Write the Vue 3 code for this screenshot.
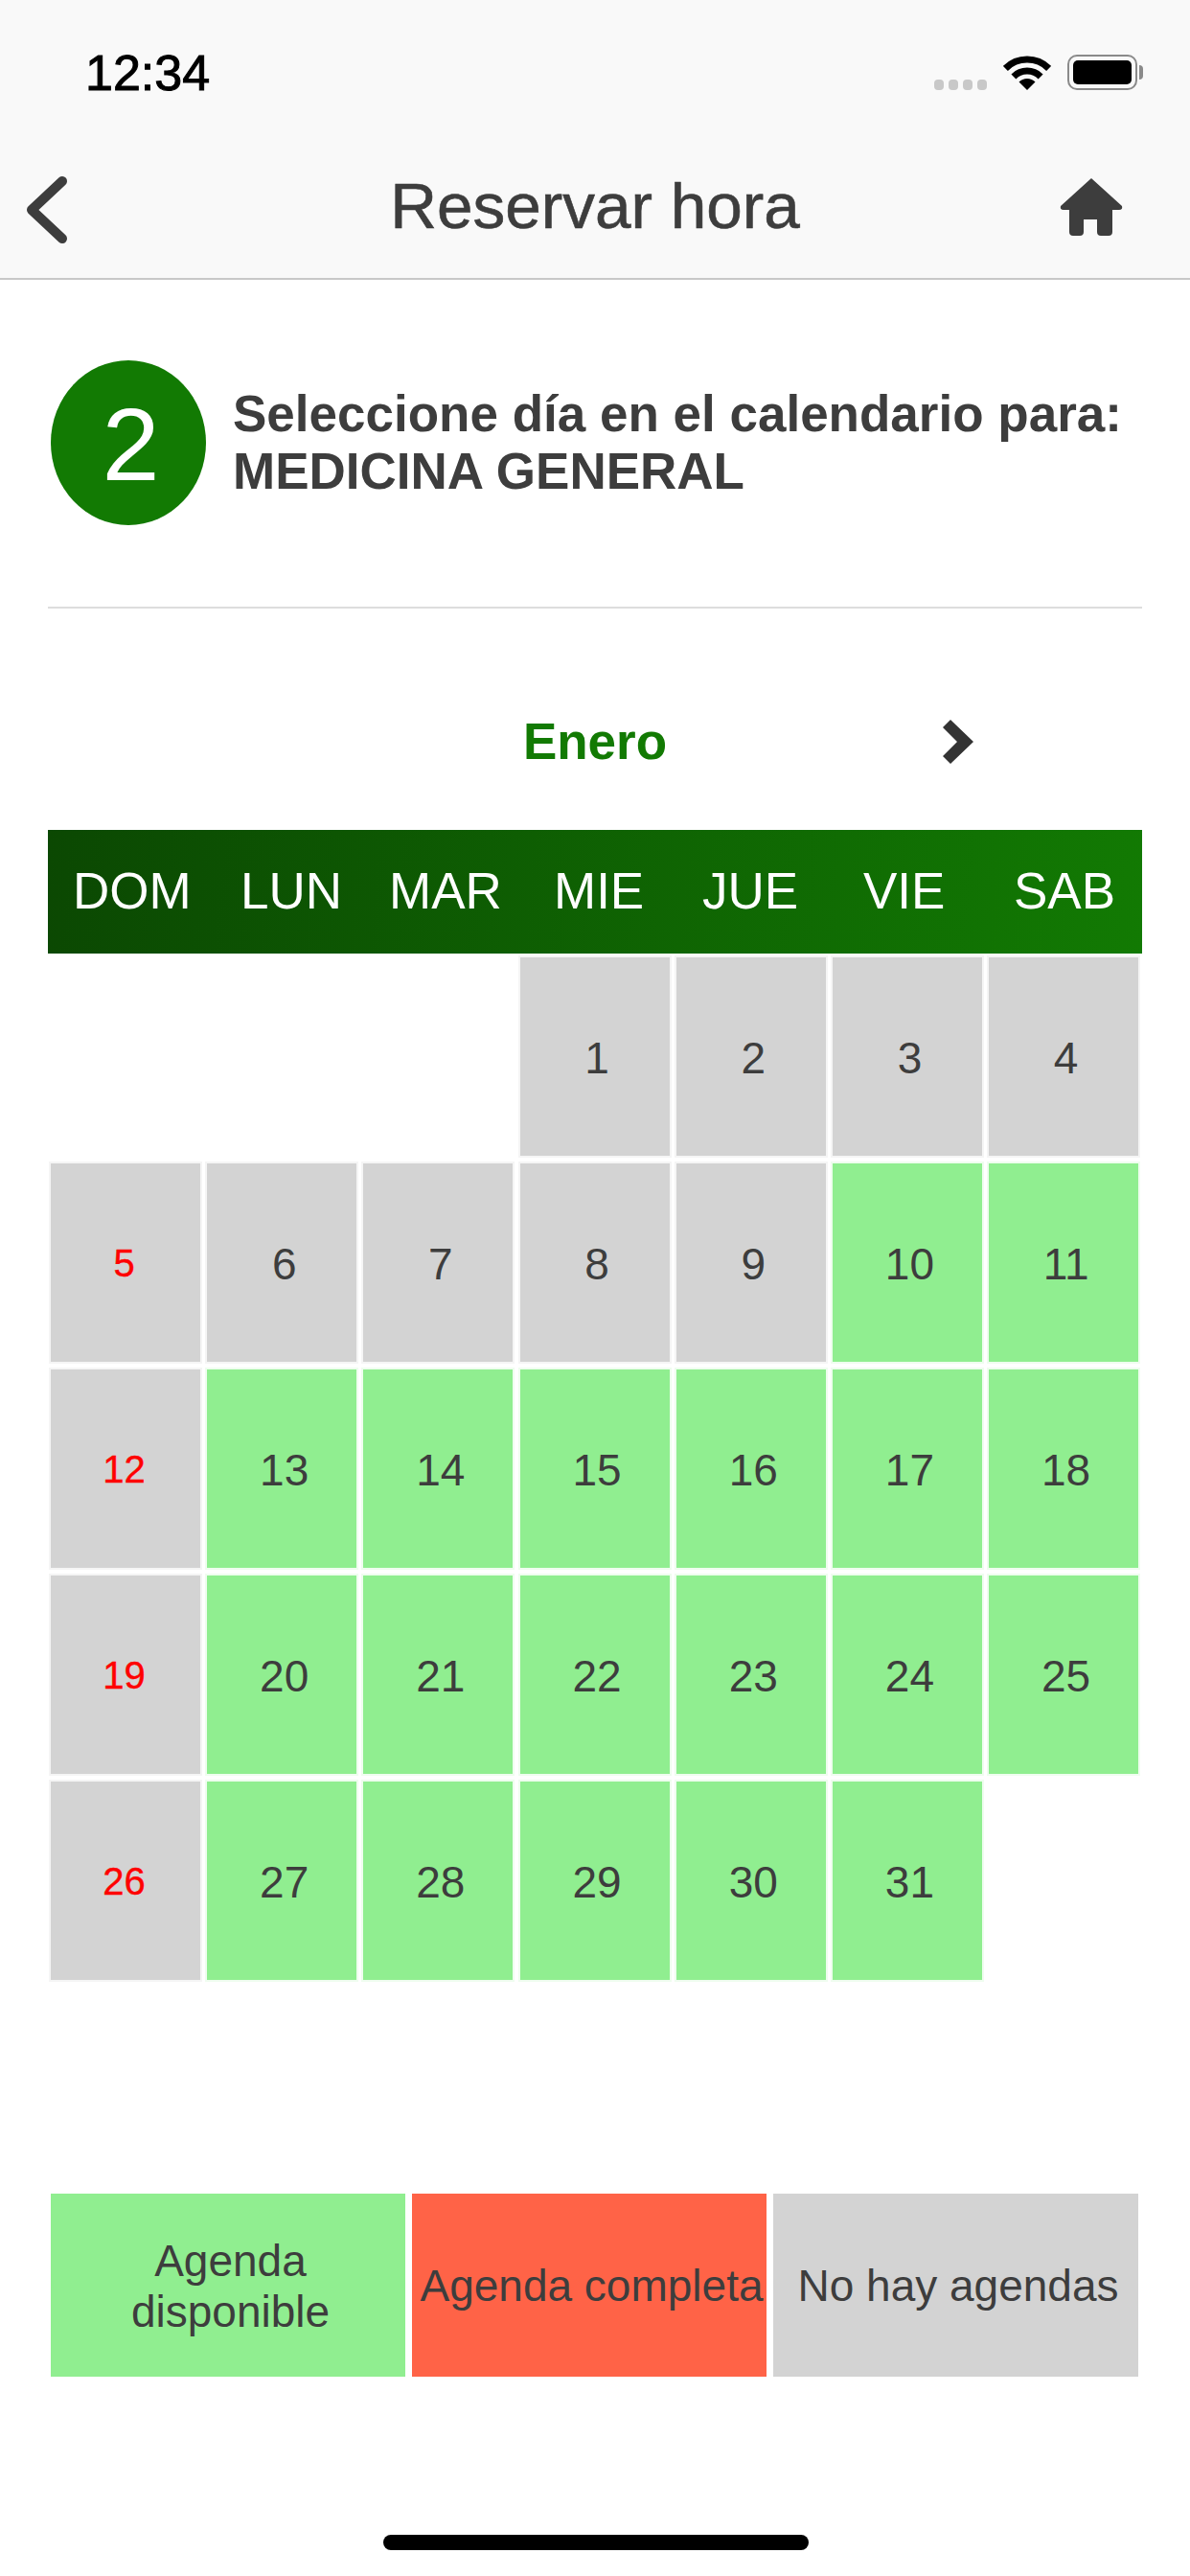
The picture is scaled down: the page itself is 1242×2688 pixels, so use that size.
<script setup>
import { computed } from "vue";

const weekDays = ["DOM", "LUN", "MAR", "MIE", "JUE", "VIE", "SAB"];

// enero empieza en miércoles, 3 huecos antes del día 1
const leadingBlanks = 3;
const firstAvailable = 10;

const cells = computed(() => {
  const list = [];
  for (let i = 0; i < leadingBlanks; i++) {
    list.push({ key: `blank-${i}`, day: "", kind: "blank" });
  }
  for (let day = 1; day <= 31; day++) {
    const isSunday = (day + leadingBlanks - 1) % 7 === 0;
    list.push({
      key: day,
      day,
      kind: isSunday || day < firstAvailable ? "none" : "free",
      isSunday,
    });
  }
  return list;
});

const legend = [
  { label: "Agenda disponible", kind: "free" },
  { label: "Agenda completa", kind: "full" },
  { label: "No hay agendas", kind: "none" },
];
</script>

<template>
  <div class="page">
    <!-- Status bar -->
    <div class="status-bar">
      <span class="clock">12:34</span>
      <div class="status-icons">
        <div class="signal">
          <i v-for="n in 4" :key="n"></i>
        </div>
        <svg class="wifi" viewBox="0 0 50 37" width="50" height="37">
          <path d="M2.4 14.4A32 32 0 0 1 47.6 14.4" fill="none" stroke="#000" stroke-width="7" />
          <path d="M10.9 22.9A20 20 0 0 1 39.1 22.9" fill="none" stroke="#000" stroke-width="7" />
          <path d="M25 37L16.5 28.5A12 12 0 0 1 33.5 28.5Z" fill="#000" />
        </svg>
        <div class="battery"><div class="battery-fill"></div></div>
      </div>
    </div>

    <!-- Header -->
    <div class="nav-bar">
      <svg class="back-icon" viewBox="0 0 44 72" width="44" height="72">
        <path d="M38 6L6 36L38 66" fill="none" stroke="#3d3d3d" stroke-width="10" stroke-linecap="round" stroke-linejoin="round" />
      </svg>
      <div class="nav-title">Reservar hora</div>
      <svg class="home-icon" viewBox="0 0 66 60" width="66" height="60">
        <path d="M33 0L65 29Q66 33 62 33H55V56Q55 60 51 60H43Q39 60 39 56V43H25V56Q25 60 21 60H14Q10 60 10 56V33H4Q0 33 1 29Z" fill="#3d3d3d" />
      </svg>
    </div>

    <div class="content">
      <!-- Step -->
      <div class="step">
        <div class="step-number">2</div>
        <div class="step-text">
          Seleccione día en el calendario para:<br />
          MEDICINA GENERAL
        </div>
      </div>

      <div class="divider"></div>

      <!-- Month -->
      <div class="month-row">
        <div class="month-name">Enero</div>
        <svg class="month-next" viewBox="0 0 33 46" width="33" height="46">
          <path d="M8 0L32 23L8 46L0 38L15 23L0 8Z" fill="#333" />
        </svg>
      </div>

      <!-- Calendar -->
      <div class="week-header">
        <span v-for="name in weekDays" :key="name">{{ name }}</span>
      </div>
      <div class="days">
        <div
          v-for="cell in cells"
          :key="cell.key"
          class="day"
          :class="[cell.kind, { sunday: cell.isSunday }]"
        >
          {{ cell.day }}
        </div>
      </div>

      <!-- Legend -->
      <div class="legend">
        <div v-for="item in legend" :key="item.kind" class="legend-item" :class="item.kind">
          {{ item.label }}
        </div>
      </div>
    </div>

    <div class="home-indicator"></div>
  </div>
</template>

<style scoped>
.page {
  position: relative;
  width: 1242px;
  height: 2688px;
  overflow: hidden;
  background-color: #fff;
  color: #3d3d3d;
  font-family: "Liberation Sans", Arial, sans-serif;
}

.status-bar {
  display: flex;
  justify-content: space-between;
  align-items: flex-start;
  height: 132px;
  padding: 47px 55px 0 89px;
  box-sizing: border-box;
  background-color: #f9f9f9;
}

.clock {
  font-size: 52px;
  line-height: 58px;
  color: #000;
  -webkit-text-stroke: 1px #000;
}

.status-icons {
  display: flex;
  align-items: flex-end;
  margin-top: 10px;
}

.signal {
  display: flex;
  gap: 5px;
  margin-right: 17px;
}

.signal i {
  display: block;
  width: 10px;
  height: 11px;
  border-radius: 4px;
  background-color: #c8c8c8;
}

.wifi {
  display: block;
  margin-right: 17px;
}

.battery {
  position: relative;
  width: 73px;
  height: 37px;
  box-sizing: border-box;
  padding: 4px;
  border: 2px solid #8a8a8a;
  border-radius: 10px;
}

.battery::after {
  content: "";
  position: absolute;
  top: 9px;
  right: -8px;
  width: 4px;
  height: 15px;
  border-radius: 0 4px 4px 0;
  background-color: #8a8a8a;
}

.battery-fill {
  height: 100%;
  border-radius: 5px;
  background-color: #000;
}

.nav-bar {
  display: grid;
  grid-template-columns: 1fr auto 1fr;
  align-items: center;
  height: 160px;
  padding: 8px 27px 0;
  box-sizing: border-box;
  background-color: #f9f9f9;
  border-bottom: 2px solid #c8c8c8;
}

.back-icon {
  display: block;
  margin-top: 7px;
}

.nav-title {
  font-size: 67.5px;
  line-height: 80px;
  -webkit-text-stroke: 0.6px #3d3d3d;
}

.home-icon {
  display: block;
  justify-self: end;
  margin: 2px 43px 0 0;
}

.content {
  padding: 84px 50px 0;
}

.step {
  display: flex;
  align-items: center;
  gap: 28px;
  padding-left: 3px;
}

.step-number {
  display: flex;
  align-items: center;
  justify-content: center;
  flex: none;
  width: 162px;
  height: 172px;
  padding: 3px 0 0 5px;
  box-sizing: border-box;
  border-radius: 50%;
  background-color: #127a03;
  color: #fff;
  font-size: 108px;
}

.step-text {
  font-size: 53px;
  line-height: 60px;
  font-weight: 700;
}

.divider {
  height: 2px;
  margin-top: 85px;
  background-color: #ddd;
}

.month-row {
  display: grid;
  grid-template-columns: 1fr auto 1fr;
  align-items: center;
  margin-top: 109px;
}

.month-name {
  grid-column: 2;
  font-size: 53px;
  line-height: 60px;
  font-weight: 700;
  color: #127a03;
}

.month-next {
  display: block;
  margin-left: 288px;
}

.week-header {
  display: grid;
  grid-template-columns: 175px 155px 172px 155px 168px 157px 1fr;
  align-items: center;
  height: 129px;
  margin-top: 62px;
  padding: 0 0 2px 26px;
  box-sizing: border-box;
  background: linear-gradient(95deg, #0b4802 0%, #127a03 100%);
  color: #fff;
  font-size: 53px;
}

.days {
  display: grid;
  grid-template-columns: repeat(7, 156px);
  grid-auto-rows: 207px;
  gap: 8px 7.2px;
  margin: 4px 3px 0;
}

.day {
  display: flex;
  align-items: center;
  justify-content: center;
  padding: 2px 0 0 5px;
  box-sizing: border-box;
  font-size: 46px;
}

.day.blank {
  background: none;
}

.day.free {
  background-color: #90ee90;
  box-shadow: 0 0 0 2px #effdef;
}

.day.none {
  background-color: #d3d3d3;
  box-shadow: 0 0 0 2px #f5f5f5;
}

.day.sunday {
  padding: 2px 3px 0 0;
  color: #f00;
  font-size: 40px;
  -webkit-text-stroke: 0.4px #f00;
}

.legend {
  display: grid;
  grid-template-columns: 370px 370px 381px;
  gap: 7px;
  height: 191px;
  margin: 223px 4px 0 3px;
}

.legend-item {
  display: flex;
  align-items: center;
  justify-content: center;
  padding: 2px 0 0 5px;
  box-sizing: border-box;
  text-align: center;
  font-size: 46px;
  line-height: 53px;
}

.legend-item.free {
  padding: 2px 55px 0 60px;
  background-color: #90ee90;
}

.legend-item.full {
  background-color: #ff6347;
  white-space: nowrap;
}

.legend-item.none {
  background-color: #d3d3d3;
}

.home-indicator {
  position: absolute;
  left: 400px;
  bottom: 27px;
  width: 444px;
  height: 16px;
  border-radius: 8px;
  background-color: #000;
}
</style>

<style>
body {
  margin: 0;
}
</style>
